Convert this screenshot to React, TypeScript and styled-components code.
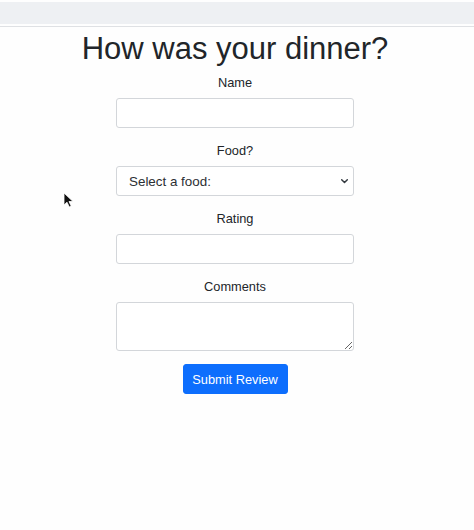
import React, { FC, useState } from 'react';
import styled, { createGlobalStyle } from 'styled-components';

const GlobalStyle = createGlobalStyle`
    html, body {
        margin: 0;
        padding: 0;
        background: #fefefe;
    }

    body {
        font-family: "Liberation Sans", Arial, Helvetica, sans-serif;
        color: #212529;
    }
`;

const BrowserStrip = styled.div`
    margin-top: 2px;
    height: 22px;
    background: #eef0f3;
    border-bottom: 2px solid #fefefe;
    box-shadow: 0 1px 0 #dfe1e4;
`;

const Page = styled.main`
    position: relative;
    display: flex;
    flex-direction: column;
    align-items: center;
    padding: 4px 4px 0 0;
`;

const Title = styled.h1`
    margin: 0 0 6px;
    font-size: 31px;
    font-weight: 400;
    line-height: 1.2;
`;

const ReviewForm = styled.form`
    display: flex;
    flex-direction: column;
    align-items: center;
    width: 238px;
`;

const Field = styled.div`
    display: flex;
    flex-direction: column;
    align-items: center;
    width: 100%;
    margin-bottom: 13px;
`;

const Label = styled.label`
    font-size: 12.8px;
    line-height: 19px;
    margin-bottom: 6px;
`;

const controlStyles = `
    box-sizing: border-box;
    width: 100%;
    border: 1px solid #d3d6da;
    border-radius: 3px;
    background-color: #fff;
    font-family: inherit;
    font-size: 12.6px;
    color: #212529;
    outline: none;
`;

const TextInput = styled.input`
    ${controlStyles}
    height: 30px;
    padding: 0 10px;
`;

const chevron = encodeURIComponent(
    "<svg xmlns='http://www.w3.org/2000/svg' viewBox='0 0 16 16'><path fill='none' stroke='#343a40' stroke-linecap='round' stroke-linejoin='round' stroke-width='2.4' d='m3.5 6 4.5 4.5 4.5-4.5'/></svg>"
);

const FoodSelect = styled.select`
    ${controlStyles}
    height: 30px;
    padding: 0 28px 0 12px;
    appearance: none;
    -webkit-appearance: none;
    background-image: url("data:image/svg+xml,${chevron}");
    background-repeat: no-repeat;
    background-position: right 3px center;
    background-size: 11px 10px;
    font-size: 13.4px;
    color: #2b2f33;
`;

const CommentBox = styled.textarea`
    ${controlStyles}
    height: 49px;
    padding: 5px 10px;
    resize: vertical;
    display: block;
`;

const SubmitButton = styled.button`
    height: 30px;
    width: 105px;
    padding: 0;
    border: 1px solid #0d6efd;
    border-radius: 3px;
    background: #0d6efd;
    color: #fff;
    font-family: inherit;
    font-size: 12.8px;
    cursor: pointer;
`;

const Pointer = styled.svg`
    position: absolute;
    left: 63px;
    top: 166px;
    width: 11px;
    height: 16px;
`;

const foods = ['Pizza', 'Pasta', 'Tacos', 'Sushi'];

const App: FC = () => {
    const [food, setFood] = useState('');

    return (
        <>
            <GlobalStyle />
            <BrowserStrip />
            <Page>
                <Title>How was your dinner?</Title>
                <ReviewForm onSubmit={(e) => e.preventDefault()}>
                    <Field>
                        <Label htmlFor="name">Name</Label>
                        <TextInput id="name" type="text" />
                    </Field>
                    <Field>
                        <Label htmlFor="food">Food?</Label>
                        <FoodSelect id="food" value={food} onChange={(e) => setFood(e.target.value)}>
                            <option value="">Select a food:</option>
                            {foods.map((f) => (
                                <option key={f} value={f}>{f}</option>
                            ))}
                        </FoodSelect>
                    </Field>
                    <Field>
                        <Label htmlFor="rating">Rating</Label>
                        <TextInput id="rating" type="text" />
                    </Field>
                    <Field>
                        <Label htmlFor="comments">Comments</Label>
                        <CommentBox id="comments" />
                    </Field>
                    <SubmitButton type="submit">Submit Review</SubmitButton>
                </ReviewForm>
                <Pointer viewBox="0 0 11 16">
                    <path d="M1 1 L1 13 L4 10.2 L6.3 15 L8.2 14.1 L6 9.5 L10 9.5 Z" fill="#111" stroke="#fff" strokeWidth="0.8" />
                </Pointer>
            </Page>
        </>
    );
};

export default App;
